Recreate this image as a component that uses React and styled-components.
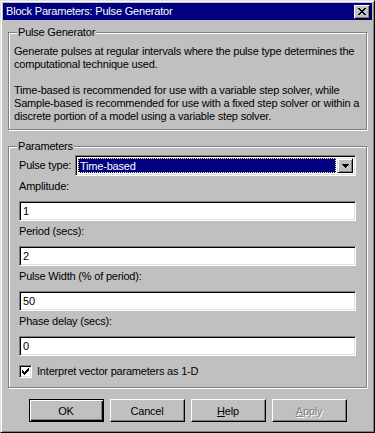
import * as React from "react";
import styled, { createGlobalStyle } from "styled-components";

const GlobalStyle = createGlobalStyle`
  html, body {
    margin: 0;
    padding: 0;
    background: #c0c0c0;
  }
  * {
    box-sizing: border-box;
  }
`;

const Window = styled.div`
  width: 375px;
  height: 433px;
  display: flex;
  flex-direction: column;
  background: #c0c0c0;
  border: 1px solid;
  border-color: #dfdfdf #000 #000 #dfdfdf;
  box-shadow: inset 1px 1px #fff, inset -1px -1px #808080;
  padding: 2px;
  font-family: "Liberation Sans", Arial, sans-serif;
  font-size: 11px;
  letter-spacing: -0.2px;
  color: #000;
`;

const TitleBar = styled.div`
  height: 17px;
  display: flex;
  align-items: center;
  justify-content: space-between;
  background: #000080;
  color: #fff;
  padding-left: 3px;
  padding-right: 2px;
`;

const Title = styled.span`
  line-height: 17px;
`;

const CloseButton = styled.div`
  width: 16px;
  height: 14px;
  display: flex;
  align-items: center;
  justify-content: center;
  background: #c0c0c0;
  border: 1px solid;
  border-color: #fff #000 #000 #fff;
  box-shadow: inset -1px -1px #808080;
`;

const Body = styled.div`
  flex: 1;
  display: flex;
  flex-direction: column;
  padding: 12px 5px 0;
`;

const Group = styled.div`
  position: relative;
  border: 1px solid #808080;
  box-shadow: inset 1px 1px #fff, 1px 1px #fff;
  padding: ${(p) => p.$pad};
  margin-top: ${(p) => p.$top || 0}px;
`;

const Legend = styled.span`
  position: absolute;
  top: -8px;
  left: 8px;
  padding: 0 1px;
  background: #c0c0c0;
  line-height: 14px;
`;

const Paragraph = styled.p`
  margin: 0;
  line-height: 13px;
  & + & {
    margin-top: 13px;
  }
`;

const Row = styled.div`
  display: flex;
  align-items: center;
`;

const RowLabel = styled.span`
  width: 56px;
  line-height: 13px;
`;

const Combo = styled.div`
  flex: 1;
  height: 21px;
  display: flex;
  background: #fff;
  border: 1px solid;
  border-color: #808080 #fff #fff #808080;
  box-shadow: inset 1px 1px #000, inset -1px -1px #dfdfdf;
  padding: 2px;
`;

const Selected = styled.div`
  flex: 1;
  display: flex;
  align-items: center;
  background: #000080;
  color: #fff;
  padding-left: 2px;
  outline: 1px dotted #ffff80;
  outline-offset: -1px;
  margin-right: 1px;
`;

const DropButton = styled.div`
  width: 16px;
  display: flex;
  align-items: center;
  justify-content: center;
  background: #c0c0c0;
  border: 1px solid;
  border-color: #dfdfdf #000 #000 #dfdfdf;
  box-shadow: inset 1px 1px #fff, inset -1px -1px #808080;
`;

const Field = styled.div`
  display: flex;
  flex-direction: column;
`;

const FieldLabel = styled.label`
  line-height: 13px;
  margin-top: 4px;
  margin-bottom: 8px;
`;

const TextInput = styled.div`
  height: 20px;
  display: flex;
  align-items: center;
  background: #fff;
  border: 1px solid;
  border-color: #808080 #fff #fff #808080;
  box-shadow: inset 1px 1px #000, inset -1px -1px #dfdfdf;
  padding-left: 3px;
`;

const CheckRow = styled.div`
  display: flex;
  align-items: center;
  gap: 5px;
  margin-top: 9px;
  line-height: 13px;
`;

const CheckBox = styled.div`
  width: 13px;
  height: 13px;
  display: flex;
  align-items: center;
  justify-content: center;
  background: #fff;
  border: 1px solid;
  border-color: #808080 #fff #fff #808080;
  box-shadow: inset 1px 1px #000, inset -1px -1px #dfdfdf;
`;

const ButtonRow = styled.div`
  display: flex;
  justify-content: center;
  gap: 6px;
  margin-top: 11px;
`;

const Button = styled.div`
  width: 75px;
  height: 23px;
  display: flex;
  align-items: center;
  justify-content: center;
  background: #c0c0c0;
  border: 1px solid;
  border-color: ${(p) => (p.$default ? "#000" : "#fff #000 #000 #fff")};
  box-shadow: ${(p) =>
    p.$default
      ? "inset 1px 1px #fff, inset -1px -1px #000, inset -2px -2px #808080"
      : "inset -1px -1px #808080"};
  color: ${(p) => (p.$disabled ? "#808080" : "#000")};
  text-shadow: ${(p) => (p.$disabled ? "1px 1px #fff" : "none")};
  u {
    text-decoration: underline;
  }
`;

const CloseGlyph = () => (
  <svg width="8" height="7" viewBox="0 0 8 7" shapeRendering="crispEdges">
    <path
      fill="#000"
      d="M0 0h2v1h-2zM6 0h2v1h-2zM1 1h2v1h-2zM5 1h2v1h-2zM2 2h4v1h-4zM3 3h2v1h-2zM2 4h4v1h-4zM1 5h2v1h-2zM5 5h2v1h-2zM0 6h2v1h-2zM6 6h2v1h-2z"
    />
  </svg>
);

const ArrowGlyph = () => (
  <svg width="7" height="4" viewBox="0 0 7 4" shapeRendering="crispEdges">
    <path fill="#000" d="M0 0h7v1h-7zM1 1h5v1h-5zM2 2h3v1h-3zM3 3h1v1h-1z" />
  </svg>
);

const CheckGlyph = () => (
  <svg width="7" height="7" viewBox="0 0 7 7" shapeRendering="crispEdges">
    <path
      fill="#000"
      d="M6 0h1v3h-1zM5 1h1v3h-1zM4 2h1v3h-1zM3 3h1v3h-1zM2 4h1v3h-1zM1 3h1v3h-1zM0 2h1v3h-1z"
    />
  </svg>
);

const fields = [
  { label: "Amplitude:", value: "1" },
  { label: "Period (secs):", value: "2" },
  { label: "Pulse Width (% of period):", value: "50" },
  { label: "Phase delay (secs):", value: "0" },
];

export default function App() {
  return (
    <>
      <GlobalStyle />
      <Window>
        <TitleBar>
          <Title>Block Parameters: Pulse Generator</Title>
          <CloseButton>
            <CloseGlyph />
          </CloseButton>
        </TitleBar>
        <Body>
          <Group $pad="12px 5px 6px">
            <Legend>Pulse Generator</Legend>
            <Paragraph>
              Generate pulses at regular intervals where the pulse type determines the
              computational technique used.
            </Paragraph>
            <Paragraph>
              Time-based is recommended for use with a variable step solver, while
              Sample-based is recommended for use with a fixed step solver or within a
              discrete portion of a model using a variable step solver.
            </Paragraph>
          </Group>
          <Group $pad="8px 10px 9px" $top={16}>
            <Legend>Parameters</Legend>
            <Row>
              <RowLabel>Pulse type:</RowLabel>
              <Combo>
                <Selected>Time-based</Selected>
                <DropButton>
                  <ArrowGlyph />
                </DropButton>
              </Combo>
            </Row>
            {fields.map((f) => (
              <Field key={f.label}>
                <FieldLabel>{f.label}</FieldLabel>
                <TextInput>{f.value}</TextInput>
              </Field>
            ))}
            <CheckRow>
              <CheckBox>
                <CheckGlyph />
              </CheckBox>
              Interpret vector parameters as 1-D
            </CheckRow>
          </Group>
          <ButtonRow>
            <Button $default>OK</Button>
            <Button>Cancel</Button>
            <Button>
              <span>
                <u>H</u>elp
              </span>
            </Button>
            <Button $disabled>
              <span>
                <u>A</u>pply
              </span>
            </Button>
          </ButtonRow>
        </Body>
      </Window>
    </>
  );
}
